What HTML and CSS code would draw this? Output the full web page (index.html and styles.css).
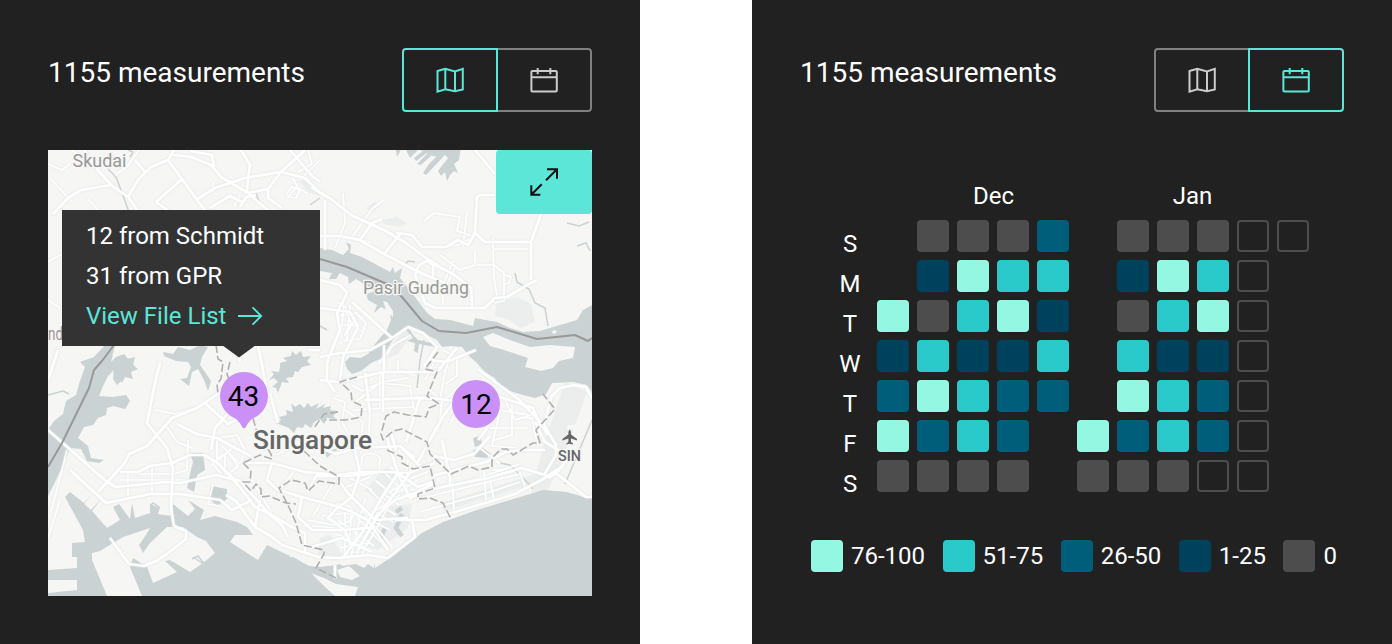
FILE: index.html
```html
<!DOCTYPE html>
<html lang="en">
<head>
<meta charset="utf-8">
<title>Measurements</title>
<link rel="stylesheet" href="styles.css">
</head>
<body>
<svg width="0" height="0" class="defs">
  <symbol id="i-map" viewBox="0 0 32 32"><path d="M3.500 7 11.300 4.700 21 7.500l7.800-2.700v20.700L21 27.200l-9.700-2-7.800 2.500zM11.300 4.700v20.500M21 7.500v19.700"/></symbol>
  <symbol id="i-cal" viewBox="0 0 32 32"><rect x="3.400" y="7" width="25.400" height="20.500" rx="1"/><path d="M3.400 13.300h25.400M9.700 4v6.300M22.300 4v6.300"/></symbol>
</svg>
<main class="page">
  <section class="panel">
    <header class="head">
      <h2 class="title">1155 measurements</h2>
      <div class="toggle">
        <button class="tab active"><svg class="icon"><use href="#i-map"/></svg></button>
        <button class="tab"><svg class="icon"><use href="#i-cal"/></svg></button>
      </div>
    </header>
    <div class="map">
      <svg class="canvas" viewBox="48 150 544 446">
        <rect class="land" x="48" y="150" width="544" height="446"/>
        <g class="urban">
          <path d="M383 220l14-3 10 6-6 4-18-3zM497 302l20-5 14 7 4 18-14 6-14-9-12-3zM298 180l14 2 8 14-12-4zM392 345l12-15 8 4-14 20-10 4zM320 538l10-4 12 20-4 8-20-8zM372 520l20-14 20-2-4 24-30 22-14-4zM365 490l20-22 12 6-20 26zM545 440l20-58 22 10-24 66-16 34-16 1zM440 503l100-30 4 8-100 30zM366 208l8-6 6 4-8 6z"/>
        </g>
        <g class="water">
          <path d="M320 248 332 250 343 255 349 249 346 242 351 245 350 253 362 257 377 265 390 272 393 267 395 273 402 268 400 278 412 293 427 313 435 319 450 320 473 326 475 318 485 320 497 322 510 328 523 332 540 331 550 328 577 320 583 310 592 305V392L587 385 573 382 552 383 546 394 535 398 523 395 510 391 500 387 495 378 485 372 476 362 470 357 462 347 451 346 442 347 437 340 423 333 408 326 399 333 392 341 386 351 380 359 371 363 361 371 352 374 347 369 345 362 350 357 361 358 368 354 378 340 387 330 391 320 389 311 381 307 374 313 377 305 368 300 366 294 375 291 356 279 349 284 348 277 340 273 336 279 329 279 332 273 320 271z"/>
          <path d="M396 150 397 157 401 150zM406 150l4 8 8-8zM414 158l2 3 12-9-5-1zM417 164l4 1 11-10-5-1zM423 173l3 2 18-19-5-2-10 10zM420 150l10 5 10 3 5-3 3 3-10 13 3 5 4-4 2 9 3-6 4-4 4 2-4-9 5-4 2-13-4-6 5-1z"/>
          <path d="M400 323l6 1 7 11 5 5 18 4-1 3-16-3-1 9-4-2 1-8-8-2 6-3z"/>
          <path d="M105 345H115L111 362 116 357 124 354 129 360 134 366 126 376 117 385 113 379 114 370 108 376 103 386 99 396 113 397 126 395 130 401 125 409 113 406 107 408 106 415 98 418 93 425 84 427 78 438 88 446 91 458 104 460 99 463 87 461 81 449 70 448 63 465 56 480 48 496V430L54 421 63 414 66 401 76 395 80 381 85 367 80 362 94 357z"/>
          <path d="M163 352 173 354 178 347 190 350 200 345 208 347 202 357 200 365 205 372 211 381 208 391 204 380 198 369 192 372 189 386 180 379 187 378 191 367 188 362 176 361 164 356z"/>
          <path d="M280 363l7-2-4-3 8-2 1-5 4 4 5-4 2 6 8-1-4 5 4 4-9 2-4 5-3-1-2 6-7 1 3 5-7-1-4 11-2-5-4-1 6-5-4-4-5 2 5-6-3-3 8 1 1-5zM276 423l5-3-2-3 8-2-1-5 7 2-2-9 4 4 5-3 4 4 4-5 3 4 8-4-3 6 9-5-2 4 8-2-1 4 8 1-5 5 3 3-9-1-3 6-4-5-6 3-3 6-6-4-2 4-6-1-3 6-5-5z"/>
          <path d="M473 438l7-2 2 8-7 3zM473 450l10-2 8 6-4 4-12-1zM211 486l16 3v10l-10 7-8-8zM190 453l13 0 2 17-8 5-3 17-7-4 4-18 2-8zM325 452l14-4-8 6-4 4z"/>
          <path d="M114 360l8-5 5 4 8-2-2 8 5 4-7 3 2 7-8-2-3 6-4-8-5-2 4-6z"/>
          <path d="M48 570 77 568V557H72V543L85 542 83 530 65 497 70 492 84 503 92 494 84 504 91 510 101 499 92 511 107 528 120 520 113 507 119 504 130 519 132 503 135 518 150 513V504L160 508 157 514 172 516 173 504 188 516 195 509 188 500 204 510 200 520 215 516 237 522 247 527 253 535 235 535 230 542 258 560 267 545 290 556 281 578 271 573 280 558 293 557 309 566 320 567 336 565 373 557 375 568 387 560 413 540 422 533 443 522 477 510 510 500 543 490 567 492 587 498 592 498V596H48z"/>
        </g>
        <g class="land">
          <path d="M48 580H77V590L48 593zM92 553 100 551 123 537 150 528 146 535 139 545 143 553 150 543 167 527 183 527 197 537 206 541 215 553 203 563 190 572 170 560 165 561 177 572 153 583 147 567 133 558 130 567 142 596H107L92 560zM337 570l12-4 11 10-8 4-12-3zM311 573l13 5 12 6 22 3-3 9h-20l-10-9zM483 337l10-4 17 7 20 7 20-2 25 2-2 11-14 3-6 7-12 3-16-4 3-9-24-8-14-4zM383 301l4 1 6 9 0 6-6-4zM553 330l4 1-2 3-3-1zM336 560l38-4 0 12-6-4-4 4-8-4-14 2z"/>
        </g>
        <g class="stream">
          <path d="M108 169l8 8 5 13 8 22M128 150l5 2-3 5M256 193l3 8 9 11M515 273l2 9 12 7 6 14 10 5 3 18M567 223l12 3 10-4M577 246l9-3 4 8M424 340l-4 20-3 28M405 265l3-4 7 1M592 420l-27 64M318 325l9 5M48 395l15-4 6 3M500 463l10 2 18 18 5 6M193 557l12 8M192 559l6-3 7 9M150 506l3-3 6 4-2 8M320 198l-10 7"/>
          <path class="lake" d="M373 528l8-10M380 540l5-12M402 514l-6 14 6 8M396 512l6-4"/>
        </g>
        <g class="minor">
          <path d="M48 164l14 6 8-6M50 178l22 24M88 199l10 11M115 175l12-8 12-17M72 150l10 8 6-4M213 182v6l12-3 10-3M240 195l-6 12M286 195l6-8 8 3-4 8-8-1 8-10M292 176l6 12 10 6M308 150l4 14-14 8M320 160l-20 20M424 221l10-8 26 4-3 14 18 6M475 236l-14 8-20 4M467 212l-4 35M372 243l-20-6 20-28 12-9M335 248l10-25-2-30M493 238l1 40 3 18M493 249h36M440 255l20 15 15-5v-14M455 268l-12 24M477 265l17 0 10 8v28l-10 2M505 275l6 2-2 6-4 1M443 305v-20l10-24M48 262l14-8M48 300l12 8M52 370l6-20"/>
          <path d="M128 472v26M152 468v26M128 474h46M120 480h66M188 440l-1 30-13 4M155 410l20 4 20-6M165 424l12 18 15 6M207 440l30-5 8 15-4 12M212 465l24-20M213 484l-5 20 12 2M225 455v20M217 440v26M222 446l18 18M67 450l-16 62M60 500l-12 38M212 462l16-10 10 14-14 12z"/>
          <path d="M337 302l8 5 6 16 10 8M340 315l16-2 10 10-6 16-16 2M344 300l-3 38M350 305l-3 36M356 318l-12 18M338 325h22M380 360l-1 4 14-19 18-10M443 350l14 8 0 18-12 8M452 350l-7 22-5 28M366 373l4 36-1 26M354 403l26-20 30 3 4 24M352 385l10 6 20-9 26-4M380 373v36M398 360l0 10 18 6M345 410l18 12-2 16M333 398l12 4-3 20 10 18M353 410l60-3M415 396l24 3M430 390l12 12-4 30M458 405l-8 20M425 380l10-20M460 385l-20 20M489 426l10-16 36 6M500 410l-8 36 26 2M505 400l10 20 20-6M512 405v30l-20 6M520 418l12 0 4 20M487 428h40M480 448l20 16M484 470l2 30M452 478l2 32M490 480l4 20M410 490l50-6 60-20M415 500l105-26M420 512l70-20 30-10M492 470h10v8M520 472l5 15"/>
          <path d="M362 457c3-6 20-4 18 4s2 9-4 12-15-2-15-6zM295 470l-14 18M252 480l20 34M276 455l22-12 10-10M335 480l-22 36M308 520l30 6M322 516l24-3 20 6M312 526l50 4M335 534l32 10M330 512c0-8 10-10 18-6s6 12 0 16-18 0-18-10M345 512l0 42M352 508l-4 48M338 520l36 26M350 510l38 40M358 505l34 42M365 498l-14 58M385 505l-28 48M392 500l-30 54M370 520l20 10M375 512l18 10M380 505l16 10M385 495l14 10M400 495l-30 18M410 492l-40 22M418 480l-30 18M375 480l24 20M384 472l20 20M390 466l14 16-14 10M370 490l14 14M432 470l-30 12M408 460l-3 20 4 16M344 488l28-12M350 478l22 12M345 540l20 6M340 548l22-5"/>
        </g>
        <g class="major">
          <path d="M53 214l15-16 13-8 30-5 17 12 10 14M111 185 98 170 88 156 84 150M128 197 138 180 151 167 168 160 174 150M145 172l-10-12M168 160 206 212M181 180 156 202 170 212M173 155 191 157 211 165 221 177 248 193 270 212M196 200 215 188 245 178 281 172 305 178 320 193M190 151l22 4 2 12M241 150l9 15-2 14-1 12M248 193l20-4 13-17 24-22M290 150l22 26 8 6M240 207l6-10 10-2M210 208l20-12 12 6M268 190l0 8 14 10M311 187l20 12 20 16 35 16 20 12 20 15 14 9M325 200v50M320 236l20 0 20 4 26 15 35 18 24 10M360 240l12-17 10-4M384 254l18-22M396 233l16 2 10 12h24l12-7 10 5 7-12 2-36 4-2h14M475 150l20 24M541 214l-10 28v38M475 233l10 9h46M415 275l4-10 8-4 6 4 0 14M415 275l10 28 10 5h50l10-10 12-1 20-12 10-5M433 264l20 10 18 14 1 20"/>
          <path d="M48 430l58 51 10 6 50-5 14 1 36-8 24 6 30 34 12 10 6 12M70 470l36 33 44-9 30 0 40 6 12 10 20-10M98 492l26-28 5-10 18-8 25-28 25-10 25-17M160 363l-5 20-8 40 20 25 6 20-2 40 3 18 12 5 0 8-18 14-10 7-14 6-15-2-19-26M120 472h18l12-6 22-3 18-8 14 0 14 8 20 22M177 424l20 10 20 4 18 10 16 8M204 402l24 22 20-10M211 450l4-22 18-20M258 345l10 52M270 393l8 30M48 380l10-30M238 350l2 12"/>
          <path d="M226 495l10 6 19 26 17 10 10 8 36 12 20 1 30-3 20 3 27-21-3-17M228 472l27 35 13 6 24 14 13 6 0 19M255 527l5-27M245 463l27 0 33 9 33 3 24-3h23l23 1 27-10M272 463l-5 17 11 10 24 7 30 8 16 5 20 10 20 30M302 497l-4 20 14 13 33 0 30-3M318 473l-11 19M355 450l5 23-8 24-17 13-7 8 17 12 7 17M338 480l10 13 17 17 10 10 33-2M386 434l6 20 6 19-16 24-20 36-18 23M412 470l-20 27-17 23-17 30M398 473l20 14 17-6M435 483l-20 10-20 7-20 17M308 548l34-10 30 14"/>
          <path d="M320 280l20 5 7 8-10 20 3 17-7 17-6 16 0 17 8 12M320 308l30 4 8 15-15 30-3 23M352 302l40 36-22 12-30 3-20 4M392 338l16-11 15 6 14 14-13 20M320 380l20 2 43-10h54M383 372v40M365 373l5 40M425 397l30 4M320 350l-12 0M437 372l20-24M365 400l50-2 24 1M384 345l0 27M326 450l10 4 20-6 44-2 20 20M430 360l16 2 30-12M466 384l-24 34-24 44M478 369l40 30 20 20 10 16M497 396l36 12 8 20M478 440l8-10 6-20M434 456l20 4 20-6 16-18M318 476h30l30-3M432 476l54-14 20-10 14-2 25 0M398 474l12 24 18-8 60-12 34-10 26 8M442 440l8 38 0 8M395 520h30l30-8 60-18 30-16 20-14M552 395l-8 30 12 20 0 10-12 20M552 396l8-8 14-3 12 2 6 12M548 478l8-5 30 24 6 0M555 475l12-15M535 422l10 20 20 12M335 565v14M390 430l6 20M400 446l15 12M420 398l-14 44"/>
        </g>
        <rect class="land" x="567" y="425" width="8" height="4"/>
        <g class="borders">
          <path d="M320 259 347 267 387 284 402 297 422 321 439 331 466 333 497 327 537 339 575 335 588 341 592 338M114 345 102 361 94 370 89 388 62 443 48 467"/>
        </g>
        <g class="dashed">
          <path d="M216 345l2 14 5 3-2 17-4 5 1 10M230 362l-3 12 3 8M438 352l-13 17 12 3-10 24 12 8-10 4-3 9-18-2-14-3-8 4-5 18 2 6 10-9 9-2 25 13 3 12 21 20 18-8 9 4 14-3V458l9-9 6 0 6 6 20-12h7l-4-13 19-21-12-15M357 377l-17 5 11 10 1 9 10 5-1 11-15 3-21 0M338 412l-14 2-10 14M387 450l15 7 0 6 11 6 17-3 5 22-17 6 0 5 12-1 13 5 8 16M253 418l6 22M262 440l9 14 1 5-12-4-17 8M243 463l8 8-1 11-7 0 8 9 5-7 5 5 0 8 8-1 17 7 10 1M304 451l16 15 19 11 0 7-20-3-11 10-3-8-14-3-12 8 9 17 8 18 6 22 22 5 0 4-8 14 20 10"/>
        </g>
        <g class="labels">
          <text class="place" x="72.500" y="166.500" textLength="54" lengthAdjust="spacingAndGlyphs">Skudai</text>
          <text class="place" x="363" y="293.500" textLength="106" lengthAdjust="spacingAndGlyphs">Pasir Gudang</text>
          <text class="place" x="48" y="340" textLength="15" lengthAdjust="spacingAndGlyphs">nd</text>
          <text class="city" x="253" y="449" textLength="119" lengthAdjust="spacingAndGlyphs">Singapore</text>
          <path d="M569.700 430c1 0 1.300 1.500 1.300 4.500l6 4.500v1.500l-6-2v3.500l2 1.500v1l-3.300-.700-3.300.700v-1l2-1.500v-3.500l-6 2V439l6-4.500c0-3 .300-4.500 1.300-4.500z"/>
          <text class="code" x="558" y="461" textLength="23" lengthAdjust="spacingAndGlyphs">SIN</text>
        </g>
        <g class="pins">
          <path d="M244 372a24 24 0 0 1 10 45.800c-4 2-6.500 6-8.300 9.400q-1.700 2-3.400 0c-1.800-3.400-4.300-7.400-8.300-9.400A24 24 0 0 1 244 372z"/>
          <circle cx="476" cy="404" r="24"/>
          <text x="243.500" y="406">43</text>
          <text x="476" y="413.500">12</text>
        </g>
      </svg>
      <div class="popup">
        <p>12 from Schmidt</p>
        <p>31 from GPR</p>
        <a class="link">View File List <svg class="arrow" viewBox="0 0 26 20"><path d="M1 10h23M15.500 1.300 24.200 10l-8.700 8.700"/></svg></a>
      </div>
      <button class="expand"><svg class="icon" viewBox="0 0 32 32"><path d="M18 14.300 29 3.300M19 3.300h10v9.400M13.700 18.300 3.300 28.700M3.300 19.300v9.400h9"/></svg></button>
    </div>
  </section>

  <section class="panel">
    <header class="head">
      <h2 class="title">1155 measurements</h2>
      <div class="toggle">
        <button class="tab"><svg class="icon"><use href="#i-map"/></svg></button>
        <button class="tab active"><svg class="icon"><use href="#i-cal"/></svg></button>
      </div>
    </header>
    <div class="calendar">
      <div class="months"><span class="dec">Dec</span><span class="jan">Jan</span></div>
      <div class="week"><b>S</b><i></i><i class="z"></i><i class="z"></i><i class="z"></i><i class="c"></i><i></i><i class="z"></i><i class="z"></i><i class="z"></i><i class="e"></i><i class="e"></i></div>
      <div class="week"><b>M</b><i></i><i class="d"></i><i class="a"></i><i class="b"></i><i class="b"></i><i></i><i class="d"></i><i class="a"></i><i class="b"></i><i class="e"></i></div>
      <div class="week"><b>T</b><i class="a"></i><i class="z"></i><i class="b"></i><i class="a"></i><i class="d"></i><i></i><i class="z"></i><i class="b"></i><i class="a"></i><i class="e"></i></div>
      <div class="week"><b>W</b><i class="d"></i><i class="b"></i><i class="d"></i><i class="d"></i><i class="b"></i><i></i><i class="b"></i><i class="d"></i><i class="d"></i><i class="e"></i></div>
      <div class="week"><b>T</b><i class="c"></i><i class="a"></i><i class="b"></i><i class="c"></i><i class="c"></i><i></i><i class="a"></i><i class="b"></i><i class="c"></i><i class="e"></i></div>
      <div class="week"><b>F</b><i class="a"></i><i class="c"></i><i class="b"></i><i class="c"></i><i></i><i class="a"></i><i class="c"></i><i class="b"></i><i class="c"></i><i class="e"></i></div>
      <div class="week"><b>S</b><i class="z"></i><i class="z"></i><i class="z"></i><i class="z"></i><i></i><i class="z"></i><i class="z"></i><i class="z"></i><i class="e"></i><i class="e"></i></div>
    </div>
    <div class="legend">
      <span class="key"><i class="a"></i>76-100</span>
      <span class="key"><i class="b"></i>51-75</span>
      <span class="key"><i class="c"></i>26-50</span>
      <span class="key"><i class="d"></i>1-25</span>
      <span class="key"><i class="z"></i>0</span>
    </div>
  </section>
</main>
</body>
</html>
```
FILE: styles.css
```css
* { box-sizing: border-box; }
body { margin: 0; background: #fff; color: #fff; font: 24px/40px Roboto, sans-serif; }
.defs { position: absolute; }
.page { display: flex; gap: 112px; width: 1392px; height: 644px; overflow: hidden; }
.panel { width: 640px; height: 644px; padding: 48px; background: #212121; }
.head { display: flex; justify-content: space-between; height: 64px; }
.title { margin: 0; font-size: 28px; line-height: 50px; font-weight: 400; }
.toggle { display: flex; }
.tab { display: flex; align-items: center; justify-content: center; width: 96px; height: 64px; padding: 0; background: none; border: 2px solid #808080; color: #ccc; border-radius: 4px 0 0 4px; }
.tab + .tab { margin-left: -2px; border-radius: 0 4px 4px 0; }
.tab.active { border-color: #5ce6d8; color: #5ce6d8; z-index: 1; }
.icon { width: 32px; height: 32px; fill: none; stroke: currentColor; stroke-width: 2; }

.map { position: relative; width: 544px; height: 446px; margin-top: 38px; }
.canvas { display: block; width: 544px; height: 446px; }
.land { fill: #f6f6f4; }
.urban { fill: #eceeed; }
.water { fill: #cad2d3; }
.stream { fill: none; stroke: #cad2d3; stroke-width: 1.5; }
.lake { stroke-width: 4.5; }
.minor { fill: none; stroke: #fff; stroke-width: 1.7; stroke-linejoin: round; filter: drop-shadow(0 0 1px #e2e7e7); }
.major { fill: none; stroke: #fff; stroke-width: 2.7; stroke-linejoin: round; filter: drop-shadow(0 0 1px #dde3e3); }
.borders { fill: none; stroke: #999; stroke-width: 2; stroke-linejoin: round; }
.dashed { fill: none; stroke: #b0b0b0; stroke-width: 1.6; stroke-dasharray: 8 3; stroke-linejoin: round; }
.labels { font-family: Roboto, sans-serif; fill: #666; }
.labels text { paint-order: stroke; stroke: #f6f6f4; stroke-width: 2.5px; stroke-linejoin: round; }
.place { font-size: 18px; fill: #999; }
.city { font-size: 26px; font-weight: 500; }
.code { font-size: 15px; font-weight: 500; }
.pins { fill: #cb90f8; }
.pins text { fill: #000; font-size: 28px; text-anchor: middle; }

.popup { position: absolute; left: 14px; top: 60px; width: 258px; height: 135.500px; padding: 6px 24px; background: #333; }
.popup::after { content: ""; position: absolute; left: 160px; top: 135px; width: 34px; height: 12.500px; background: #333; clip-path: polygon(0 0, 100% 0, 50% 100%); }
.popup p { margin: 0; }
.link { display: flex; align-items: center; gap: 11px; color: #5ce6d8; }
.arrow { width: 26px; height: 20px; fill: none; stroke: currentColor; stroke-width: 1.8; }
.expand { position: absolute; right: 0; top: 0; display: flex; align-items: center; justify-content: center; width: 96px; height: 64px; border: 0; border-radius: 4px; background: #5ce6d8; color: #111; }

.calendar { width: 544px; height: 380px; padding: 64px 0 0 32px; }
.months { display: grid; grid-template-columns: 199px 199px; height: 44px; margin-left: 62px; text-align: center; }
.week { display: flex; gap: 8px; height: 40px; }
.week b { width: 36px; height: 40px; margin-right: 1px; padding-top: 4px; font-weight: 400; text-align: center; }
.week i { width: 32px; height: 32px; border-radius: 4px; }
.legend { display: flex; gap: 17.500px; margin: 48px 0 0 11px; line-height: 32px; }
.key { display: flex; gap: 8px; white-space: nowrap; }
.key i { width: 32px; height: 32px; border-radius: 4px; }
.week .a, .key .a { background: #94f7e2; }
.week .b, .key .b { background: #2bcaca; }
.week .c, .key .c { background: #005e7a; }
.week .d, .key .d { background: #00415e; }
.week .z, .key .z { background: #4d4d4d; }
.week .e { border: 2px solid #4d4d4d; }
```
